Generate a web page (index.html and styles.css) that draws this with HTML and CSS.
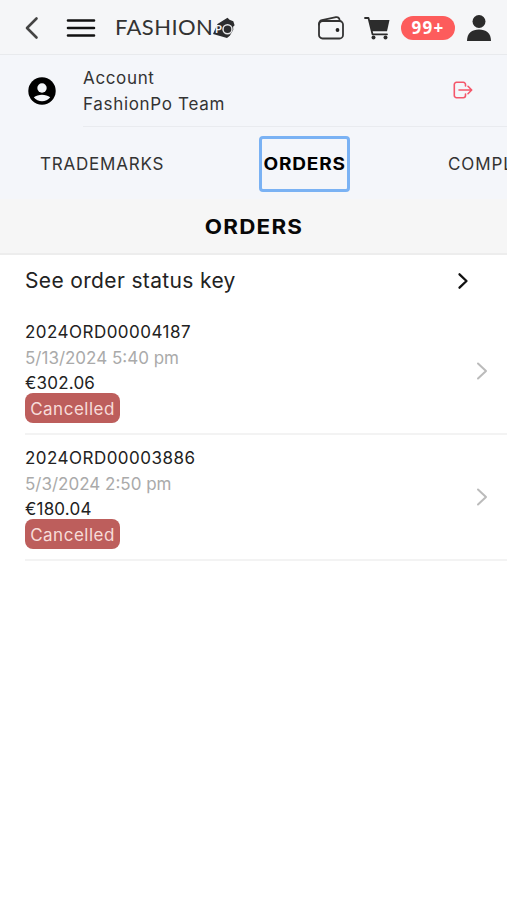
FILE: index.html
```html
<!DOCTYPE html>
<html lang="en">
<head>
<meta charset="utf-8">
<meta name="viewport" content="width=device-width, initial-scale=1">
<title>Orders</title>
<link rel="stylesheet" href="styles.css">
</head>
<body>
<header class="topbar">
  <svg class="back" width="14" height="22" viewBox="0 0 14 22"><path d="M11.500 1.500 2 11l9.500 9.500"/></svg>
  <svg class="menu" width="30" height="20" viewBox="0 0 30 20"><path d="M2 2.500h26M2 10h26M2 17.500h26"/></svg>
  <div class="logo">
    <span class="logo-text">FASHION</span>
    <svg class="logo-tag" width="24" height="24" viewBox="0 0 24 24">
      <path class="tag" d="M5.500 8 15.500 1.800 17.500 3.800l3.800 1.500 1.300 4-1.500 1.500.2 3-3.500 6-2.800 2.200L1 18Z"/>
      <text class="tag-p" x="3" y="17.200">P</text>
      <circle class="tag-o" cx="15.500" cy="13.300" r="4.500"/>
    </svg>
  </div>
  <svg class="wallet" width="28" height="26" viewBox="0 0 28 26">
    <rect x="2" y="6" width="24" height="17.500" rx="3.500"/><path d="M2 9.500C2 6.500 3.500 5.500 5 5.200L19 2.200C21 1.800 22.500 3 22.700 5.500"/><circle class="dot" cx="20.500" cy="15" r="1.900"/>
  </svg>
  <svg class="cart" width="26" height="24" viewBox="0 0 26 24">
    <path class="line" d="M1 2h3.500L8.500 18.300H23"/><path class="solid" d="M5.200 4H25.500L23 15.200H8Z"/><circle class="solid" cx="9.500" cy="21.500" r="2"/><circle class="solid" cx="21.500" cy="21.500" r="2"/>
  </svg>
  <span class="count">99+</span>
  <svg class="user" width="26" height="28" viewBox="0 0 26 28"><circle cx="13" cy="7.500" r="6.500"/><path d="M1 27c0-8 5-11.500 12-11.500S25 19 25 27Z"/></svg>
</header>

<section class="account">
  <svg class="avatar" width="28" height="28" viewBox="0 0 28 28"><circle cx="14" cy="14" r="13.700"/><circle class="cut" cx="14" cy="11" r="4.700"/><path class="cut" d="M5.800 20.300C10 16.800 18 16.800 22.200 20.300A10.600 10.600 0 0 1 5.800 20.300Z"/></svg>
  <div class="account-body">
    <div class="account-text"><span class="t-account">Account</span><span class="t-team">FashionPo Team</span></div>
    <svg class="logout" width="20" height="18" viewBox="0 0 20 18"><path d="M12.500 5V3.500A2.200 2.200 0 0 0 10.300 1.300H3.500A2.200 2.200 0 0 0 1.300 3.500v11A2.200 2.200 0 0 0 3.500 16.700h6.800a2.200 2.200 0 0 0 2.200-2.200V13M6 9h12.500M15 5.300 18.700 9 15 12.700"/></svg>
  </div>
</section>

<nav class="tabs">
  <a class="tab t-trade">TRADEMARKS</a>
  <a class="tab active"><span class="wide">ORDERS</span></a>
  <a class="tab t-comp">COMPLAINTS</a>
</nav>

<h1 class="title"><span class="wide">ORDERS</span></h1>

<main>
  <div class="key"><span class="key-text">See order status key</span>
    <svg class="chev dark" width="12" height="18" viewBox="0 0 12 18"><path d="M2.500 2.300l7 6.700-7 6.700"/></svg></div>
  <article class="order">
    <div class="info">
      <span class="num">2024ORD00004187</span>
      <span class="date">5/13/2024 5:40 pm</span>
      <span class="price">€302.06</span>
      <span class="status">Cancelled</span>
    </div>
    <svg class="chev" width="12" height="18" viewBox="0 0 12 18"><path d="M2 1.500l8 7.500-8 7.500"/></svg>
  </article>
  <article class="order">
    <div class="info">
      <span class="num">2024ORD00003886</span>
      <span class="date">5/3/2024 2:50 pm</span>
      <span class="price">€180.04</span>
      <span class="status">Cancelled</span>
    </div>
    <svg class="chev" width="12" height="18" viewBox="0 0 12 18"><path d="M2 1.500l8 7.500-8 7.500"/></svg>
  </article>
</main>
</body>
</html>
```
FILE: styles.css
```css
* { box-sizing: border-box; }
body {
  margin: 0;
  background: #fff;
  color: #222;
  font: 400 17px/25px Inter, "Open Sans", sans-serif;
  overflow: hidden;
}
svg { display: block; flex: none; fill: none; stroke-linecap: round; stroke-linejoin: round; overflow: visible; }

.topbar { display: flex; align-items: center; height: 55px; padding: 1px 0 0 25px; background: #f5f6f8; border-bottom: 1px solid #e8eaed; }
.back { stroke: #444; stroke-width: 2.600; }
.menu { margin-left: 27px; stroke: #111; stroke-width: 2.600; }
.logo { display: flex; align-items: center; margin-left: 19px; width: 121px; }
.logo-text { font: 400 22px/24px Lato, sans-serif; color: #333; width: 97px; margin-bottom: 2px; white-space: nowrap; letter-spacing: 0.400px; }
.logo-tag { width: 24px; }
.tag { fill: #2c2c2e; }
.tag-p { font: 700 11px Lato, sans-serif; fill: #f5f6f8; }
.tag-o { stroke: #e4e5e7; stroke-width: 1.500; }
.wallet { margin-left: 81px; stroke: #333; stroke-width: 1.800; }
.wallet .dot { fill: #222; stroke: none; }
.cart { margin-left: 19px; }
.cart .solid { fill: #2c2c2c; }
.cart .line { stroke: #2c2c2c; stroke-width: 1.800; }
.count { margin-left: 11px; width: 54px; height: 24px; border-radius: 12px; background: #fd5c5c; color: #fff; font: 700 17px/24px "Open Sans", sans-serif; letter-spacing: 1.200px; text-align: center; }
.user { margin-left: 11px; fill: #2b2b2b; }

.account { display: flex; align-items: center; height: 72px; padding-left: 28px; background: #f4f6fa; }
.avatar { fill: #000; }
.avatar .cut { fill: #f4f6fa; }
.account-body { display: flex; align-items: center; justify-content: space-between; flex: 1; height: 72px; margin-left: 27px; padding-right: 34px; border-bottom: 1px solid #e9ebef; }
.account-text { display: grid; line-height: 26px; color: #333; }
.t-account { letter-spacing: 0.650px; }
.t-team { letter-spacing: 0.680px; }
.logout { margin-bottom: 1px; stroke: #f4566a; stroke-width: 1.600; }

.tabs { display: flex; align-items: center; height: 72px; padding: 1px 0 0 40px; background: #f4f6fa; overflow: hidden; }
.tab { flex: none; color: #333; white-space: nowrap; padding-top: 2px; }
.t-trade { width: 219px; letter-spacing: 0.780px; }
.active { width: 91px; height: 56px; padding-top: 0; line-height: 51px; border: 3px solid #7ab2f4; border-radius: 4px; text-align: center; font-weight: 700; color: #000; letter-spacing: 0.700px; }
.wide { display: inline-block; transform: scaleX(1.120); }
.t-comp { margin-left: 98px; letter-spacing: 0.900px; }

.title { display: flex; align-items: center; justify-content: center; height: 56px; padding-top: 3px; margin: 0; background: #f6f6f6; border-bottom: 2px solid #ededed; font-size: 20px; font-weight: 700; letter-spacing: 1.100px; color: #080808; }

.key { display: flex; align-items: center; justify-content: space-between; height: 53px; padding: 0 38px 2px 25px; font-size: 21px; }
.key-text { letter-spacing: 0.350px; }
.chev { stroke: #bbb; stroke-width: 2; }
.dark { stroke: #111; stroke-width: 2.300; }
.order { display: flex; align-items: center; justify-content: space-between; height: 126px; margin-left: 25px; padding-right: 19px; border-bottom: 2px solid #f3f3f3; }
.order:first-of-type { height: 127px; padding-top: 1px; }
.info { display: grid; justify-items: start; grid-template-rows: 26px 25px 22px 30px; }
.num { letter-spacing: 0.470px; }
.price { letter-spacing: 0.200px; }
.date { color: #aaa; }
.status { width: 95px; height: 30px; border-radius: 8px; background: #bd5e5c; color: #f7dcd9; line-height: 32px; text-align: center; letter-spacing: 0.500px; }
```
